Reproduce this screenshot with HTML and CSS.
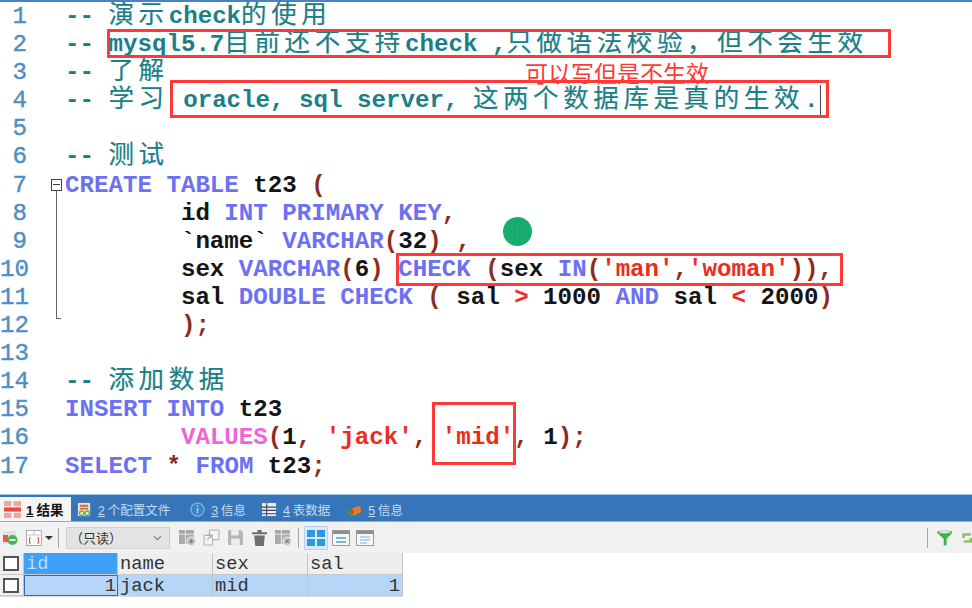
FILE: index.html
```html
<!DOCTYPE html>
<html lang="zh">
<head>
<meta charset="utf-8">
<title>SQL check</title>
<link rel="stylesheet" href="styles.css">
</head>
<body>
<main class="editor">
<div class="line"><span class="no">1</span><code><i>-- </i><i class="z">演示</i><i>check</i><i class="z">的使用</i></code></div>
<div class="line"><span class="no">2</span><code><i>-- mysql5.7</i><i class="z">目前还不支持</i><i>check ,</i><i class="z">只做语法校验，但不会生效</i></code></div>
<div class="line"><span class="no">3</span><code><i>-- </i><i class="z">了解</i></code></div>
<div class="line"><span class="no">4</span><code><i>-- </i><i class="z">学习</i><i> oracle, sql server, </i><i class="z">这两个数据库是真的生效</i><i>.</i></code></div>
<div class="line"><span class="no">5</span><code></code></div>
<div class="line"><span class="no">6</span><code><i>-- </i><i class="z">测试</i></code></div>
<div class="line"><span class="no">7</span><code><b>CREATE TABLE</b> t23 <u>(</u></code></div>
<div class="line"><span class="no">8</span><code>        id <b>INT PRIMARY KEY</b><u>,</u></code></div>
<div class="line"><span class="no">9</span><code>        `name` <b>VARCHAR</b><u>(</u>32<u>) ,</u></code></div>
<div class="line"><span class="no">10</span><code>        sex <b>VARCHAR</b><u>(</u>6<u>)</u> <b>CHECK</b> <u>(</u>sex <b>IN</b><u>(</u><s>'man'</s><u>,</u><s>'woman'</s><u>)),</u></code></div>
<div class="line"><span class="no">11</span><code>        sal <b>DOUBLE CHECK</b> <u>(</u> sal <s>&gt;</s> 1000 <b>AND</b> sal <s>&lt;</s> 2000<u>)</u></code></div>
<div class="line"><span class="no">12</span><code>        <u>);</u></code></div>
<div class="line"><span class="no">13</span><code></code></div>
<div class="line"><span class="no">14</span><code><i>-- </i><i class="z">添加数据</i></code></div>
<div class="line"><span class="no">15</span><code><b>INSERT INTO</b> t23</code></div>
<div class="line"><span class="no">16</span><code>        <em>VALUES</em><u>(</u>1<u>,</u> <s>'jack'</s><u>,</u> <s>'mid'</s><u>,</u> 1<u>);</u></code></div>
<div class="line"><span class="no">17</span><code><b>SELECT</b> <u>*</u> <b>FROM</b> t23<u>;</u></code></div>

<div class="fold-box"></div>
<div class="fold-line"></div>
<div class="caret"></div>
<div class="pointer"><span></span></div>
<div class="mark mark-a"></div>
<div class="mark mark-b"></div>
<div class="mark mark-c"></div>
<div class="mark mark-d"></div>
<div class="note">可以写但是不生效</div>
</main>

<section class="panel">
  <nav class="tabs">
    <a class="tab on">
      <svg class="ic" viewBox="0 0 16 16"><rect x="0" y="0" width="16" height="16" fill="#fff"/><path d="M0 0h7v5H0zM9 0h7v5H9zM0 11h7v5H0zM9 11h7v5H9z" fill="#f3a59c"/><rect y="6" width="16" height="4" fill="#ee4b3d"/></svg>
      <span><span class="num">1</span> 结果</span>
    </a>
    <a class="tab t2">
      <svg class="ic" viewBox="0 0 16 16"><rect x="1" y="1" width="13" height="14" fill="#f2e6d8"/><path d="M3 4h9M3 7h9" stroke="#d9603c" stroke-width="2"/><circle cx="5" cy="12" r="2.4" fill="none" stroke="#69b43a" stroke-width="1.5"/><circle cx="11" cy="12" r="2.4" fill="none" stroke="#69b43a" stroke-width="1.5"/></svg>
      <span><span class="num">2</span> 个配置文件</span>
    </a>
    <a class="tab t3">
      <svg class="ic" viewBox="0 0 16 16"><circle cx="8" cy="8" r="7" fill="#3a82c8" stroke="#8fb9e3" stroke-width="1.2"/><path d="M8 6.5v5.5M8 3.5v1.6" stroke="#a9cdf0" stroke-width="1.6"/></svg>
      <span><span class="num">3</span> 信息</span>
    </a>
    <a class="tab t4">
      <svg class="ic" viewBox="0 0 16 16"><rect width="15" height="14" y="1" fill="#e8edf3"/><path d="M0 5.5h15M0 9h15M0 12.500h15M5 1v14" stroke="#3b4a5c" stroke-width="1.200"/></svg>
      <span><span class="num">4</span> 表数据</span>
    </a>
    <a class="tab t5">
      <svg class="ic" viewBox="0 0 16 16"><ellipse cx="6" cy="11" rx="5.500" ry="3.500" fill="#3fa535"/><path d="M5 7l9-3 1 7-8 3z" fill="#ef7a1d"/><circle cx="5" cy="10" r="2" fill="#d93a2b"/></svg>
      <span><span class="num">5</span> 信息</span>
    </a>
  </nav>

  <div class="toolbar">
    <svg class="ic first" viewBox="0 0 16 16"><rect x="1" y="1" width="13" height="13" fill="#dfe3e6"/><rect x="1" y="5" width="5" height="7" fill="#ee5a45"/><circle cx="10.500" cy="10" r="5" fill="#49b35a"/><path d="M7.500 10h6" stroke="#fff" stroke-width="1.800"/></svg>
    <svg class="ic grid-ic" viewBox="0 0 16 16"><rect x=".5" y=".5" width="15" height="15" fill="#fff" stroke="#a9a9a9"/><path d="M.5 5h15M8 .5v4.500" stroke="#c5c5c5"/><path d="M5 8H3.500v5H5M11 8h1.500v5H11" fill="none" stroke="#e0604f" stroke-width="1.200"/></svg>
    <span class="caret-down"></span>
    <span class="sep"></span>
    <div class="select"><span>（只读）</span><svg class="chev" viewBox="0 0 10 6"><path d="M1 1l4 4 4-4" fill="none" stroke="#777" stroke-width="1.200"/></svg></div>
    <div class="tools">
      <svg class="ic" viewBox="0 0 16 16"><rect x="0" y="1" width="14" height="13" fill="#a8a8a8"/><path d="M0 5h14M6 1v13" stroke="#e6e6e6"/><circle cx="11.500" cy="11.500" r="4" fill="#bdbdbd" stroke="#eee"/><path d="M9.500 11.500h4M11.500 9.500v4" stroke="#777"/></svg>
      <svg class="ic" viewBox="0 0 16 16"><path d="M6 1h9v9H9v5H1V6h5z" fill="#f3f3f3" stroke="#b4b4b4"/><path d="M4 10l4-4M5 5.500h3.500V9" fill="none" stroke="#aaa" stroke-width="1.200"/></svg>
      <svg class="ic" viewBox="0 0 16 16"><path d="M1 1h12l2 2v12H1z" fill="#b5b5b5"/><rect x="4" y="1" width="7" height="5" fill="#efefef"/><rect x="4" y="9" width="8" height="6" fill="#efefef"/></svg>
      <svg class="ic" viewBox="0 0 16 16"><path d="M1 3h14v2H1zM6 1h4v2H6zM3 6h10l-1 10H4z" fill="#6f6f6f"/></svg>
      <svg class="ic" viewBox="0 0 16 16"><rect x="0" y="1" width="14" height="13" fill="#a8a8a8"/><path d="M0 5h14M6 1v13" stroke="#e6e6e6"/><circle cx="11.500" cy="11.500" r="4" fill="#c4c4c4" stroke="#eee"/><path d="M10 10l3 3M13 10l-3 3" stroke="#777"/></svg>
    </div>
    <span class="sep sep2"></span>
    <div class="views">
      <span class="view on"><svg viewBox="0 0 18 16"><path d="M0 0h8v7H0zM10 0h8v7h-8zM0 9h8v7H0zM10 9h8v7h-8z" fill="#2a9ae6"/></svg></span>
      <span class="view"><svg viewBox="0 0 18 16"><rect x=".5" y=".5" width="17" height="15" fill="#f7f7f7" stroke="#9a9a9a"/><rect x="1" y="1" width="16" height="3" fill="#8e8e8e"/><path d="M4 7h10v2H4zM4 11h10v2H4z" fill="#7fb4dd"/></svg></span>
      <span class="view"><svg viewBox="0 0 18 16"><rect x=".5" y=".5" width="17" height="15" fill="#f7f7f7" stroke="#9a9a9a"/><rect x="1" y="1" width="16" height="3" fill="#8e8e8e"/><path d="M4 7h10M4 10h10M4 13h7" stroke="#7fb4dd"/></svg></span>
    </div>
    <div class="right">
      <span class="sep"></span>
      <svg class="funnel" viewBox="0 0 18 18"><path d="M1 3c0-2 16-2 16 0 0 1-6 6-6 7v6l-3 1v-7C8 9 1 4 1 3z" fill="#3eb14a"/><ellipse cx="9" cy="3" rx="6" ry="1.300" fill="#d9f0d9"/></svg>
      <svg class="reload" viewBox="0 0 12 18"><path d="M11 5H3v4M3 13h8V9" fill="none" stroke="#8cc06a" stroke-width="3"/></svg>
    </div>
  </div>

  <div class="grid">
    <span class="cell check"><i class="box"></i></span>
    <span class="cell head sel">id</span>
    <span class="cell head">name</span>
    <span class="cell head">sex</span>
    <span class="cell head">sal</span>
    <span class="cell check"><i class="box"></i></span>
    <span class="cell val focus">1</span>
    <span class="cell val">jack</span>
    <span class="cell val">mid</span>
    <span class="cell val end">1</span>
  </div>
</section>
</body>
</html>
```

FILE: styles.css
```css
* { box-sizing: border-box; }

html, body {
  margin: 0;
  height: 100%;
}

body {
  width: 972px;
  height: 608px;
  overflow: hidden;
  background: #fff;
  display: flex;
  flex-direction: column;
  font-family: "Liberation Mono", "Noto Sans CJK SC", monospace;
}

/* ---------- editor ---------- */
.editor {
  position: relative;
  height: 494px;
  padding-top: 1px;
  border-top: 2px solid #4a82bd;
}

.line {
  display: flex;
  height: 28.1px;
  line-height: 28.1px;
  font-size: 24.15px;
  font-weight: 700;
  white-space: pre;
}

.no {
  width: 27px;
  text-align: right;
  color: #4d8ec6;
  flex: none;
  font-weight: 400;
  -webkit-text-stroke: .4px #4d8ec6;
}

code {
  font: inherit;
  margin-left: 38px;
  color: #141414;
}

code i { font-style: normal; color: #1b7f88; }
code .z {
  font-family: "Noto Sans CJK SC", sans-serif;
  font-size: 25.5px;
  line-height: 0;
  font-weight: 400;
  letter-spacing: 4.6px;
  -webkit-text-stroke: .2px #1b7f88;
}
code b { color: #6d70f2; }
code u { color: #8e2a20; text-decoration: none; }
code s { color: #ee2b1c; text-decoration: none; }
code em { color: #ee66d6; font-style: normal; }

/* ---------- overlays on the editor ---------- */
.mark {
  position: absolute;
  border: 3px solid #ff3838;
}
.mark-a { left: 107px; top: 27px; width: 784px; height: 29px; }
.mark-b { left: 170px; top: 78px; width: 659px; height: 38px; }
.mark-c { left: 396px; top: 251px; width: 447px; height: 33px; }
.mark-d { left: 432px; top: 400px; width: 84px; height: 63px; }

.note {
  position: absolute;
  left: 525px;
  top: 56px;
  font-family: "Noto Sans CJK SC", sans-serif;
  font-size: 23px;
  line-height: 28px;
  color: #ff3838;
  white-space: nowrap;
}

.caret {
  position: absolute;
  left: 820px;
  top: 83px;
  width: 1px;
  height: 31px;
  background: #444;
}

.fold-box {
  position: absolute;
  left: 51px;
  top: 177px;
  width: 11px;
  height: 12px;
  border: 1px solid #444;
  background: #fff;
}
.fold-box::after {
  content: "";
  position: absolute;
  left: 1px;
  right: 1px;
  top: 4px;
  height: 1px;
  background: #444;
}
.fold-line {
  position: absolute;
  left: 56px;
  top: 189px;
  width: 5px;
  height: 128px;
  border-left: 1px solid #666;
  border-bottom: 1px solid #666;
}

.pointer {
  position: absolute;
  left: 503px;
  top: 215px;
  width: 29px;
  height: 29px;
  border-radius: 50%;
  background: #17ac6d;
  display: flex;
  align-items: center;
  justify-content: center;
}
.pointer span {
  width: 1px;
  height: 12px;
  background: #7e8f5a;
}

/* ---------- result panel ---------- */
.panel {
  flex: none;
  display: flex;
  flex-direction: column;
}

.tabs {
  height: 28px;
  background: #3775bb;
  border-top: 1px solid #9cc0e0;
  display: flex;
  align-items: flex-end;
  font-family: "Noto Sans CJK SC", sans-serif;
  font-size: 12.5px;
  color: #c4daf1;
  border-bottom: 1px solid #7fb0e0;
}

.tab {
  display: flex;
  align-items: center;
  gap: 6px;
  height: 24px;
  white-space: nowrap;
}
.tab.on {
  width: 71px;
  padding-left: 4px;
  gap: 5px;
  background: #f5f5f5;
  color: #111;
  font-weight: 700;
  font-size: 13.5px;
}
.tab .ic { width: 15px; height: 15px; }
.tab.on .ic { width: 17px; height: 17px; }
.t2 { margin-left: 6px; }
.t3 { margin-left: 20px; }
.t4 { margin-left: 16px; }
.t5 { margin-left: 17px; }

.num { text-decoration: underline; font-family: "Liberation Sans", sans-serif; }

.toolbar {
  height: 31px;
  background: #f1f1f2;
  display: flex;
  align-items: center;
  padding-left: 2px;
}
.ic { width: 16px; height: 16px; flex: none; display: block; }
.grid-ic { margin-left: 8px; }
.caret-down {
  margin-left: 3px;
  border: 4px solid transparent;
  border-top: 4px solid #333;
  border-bottom: 0;
}
.sep {
  width: 1px;
  height: 20px;
  background: #a5a5a5;
  flex: none;
}
.toolbar > .sep { margin-left: 5px; }
.select {
  margin-left: 7px;
  width: 104px;
  height: 22px;
  background: #e3e3e3;
  border: 1px solid #cfcfcf;
  display: flex;
  align-items: center;
  justify-content: space-between;
  padding: 0 7px 0 3px;
  font-family: "Noto Sans CJK SC", sans-serif;
  font-size: 13px;
  color: #333;
}
.chev { width: 9px; height: 6px; }
.tools {
  margin-left: 9px;
  display: flex;
  gap: 7px;
}
.tools .ic { width: 17px; height: 17px; }
.toolbar > .sep2 { margin-left: 6px; }
.views {
  margin-left: 5px;
  display: flex;
  align-items: center;
  gap: 2px;
}
.view {
  width: 22px;
  height: 24px;
  display: flex;
  align-items: center;
  justify-content: center;
}
.view.on {
  width: 24px;
  background: #dbe9f8;
  border: 1px solid #b5d3f0;
}
.view svg { width: 18px; height: 16px; display: block; }

.right {
  margin-left: auto;
  display: flex;
  align-items: center;
  width: 45px;
  flex: none;
}
.funnel { width: 18px; height: 18px; margin-left: 8px; }
.reload { width: 11px; height: 18px; margin-left: 8px; }

.grid {
  display: grid;
  grid-template-columns: 24px 94px 95px 95px 95px;
  grid-auto-rows: 21.5px;
  width: 403px;
  font-size: 18.75px;
  line-height: 20px;
  border-bottom: 1px solid #d8d8d8;
}
.cell {
  display: block;
  border-right: 1px solid #c4c4c4;
  padding: 1px 0 0 2px;
  color: #333;
  white-space: nowrap;
  overflow: hidden;
}
.head { background: #eeeeee; border-bottom: 1px solid #c8c8c8; }
.sel { background: #3ea0fb; color: #bcdcf8; }
.val { background: #b6d6f9; }
.focus {
  border: 1px solid #2d70b8;
  text-align: right;
  padding: 0 1px 0 0;
}
.end { text-align: right; padding-right: 2px; }
.check {
  background: #f0f0f0;
  padding: 3px 0 0 3px;
  border-bottom: 1px solid #c8c8c8;
}
.box {
  display: block;
  width: 16px;
  height: 15px;
  background: #fff;
  border: 2px solid #555;
}
```
